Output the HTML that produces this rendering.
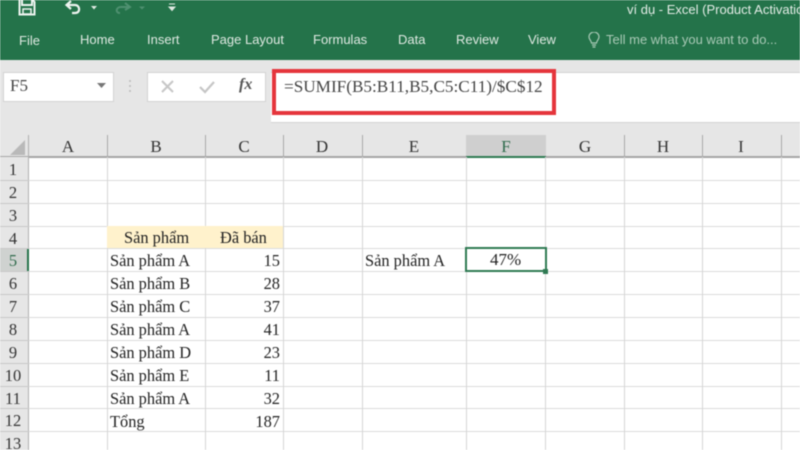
<!DOCTYPE html>
<html><head><meta charset="utf-8">
<style>
html,body{margin:0;padding:0;width:800px;height:450px;overflow:hidden;background:#fff}
.a{position:absolute;white-space:nowrap}
#r{position:relative;width:800px;height:450px;overflow:hidden;filter:blur(.5px)}
.rb{font:13px "Liberation Sans",sans-serif;color:#dfe9e2;top:32px}
.s{font:16.4px "Liberation Serif",serif;color:#222}
.h{font:17px "Liberation Serif",serif;color:#333;top:137px;width:40px;text-align:center}
.n{font:16.5px "Liberation Serif",serif;color:#333;left:0;width:26px;text-align:center}
.v{background:#d6d6d6;width:1px;top:157px;height:293px}
.l{background:#dcdcdc;height:1px;left:29px;width:771px}
.hl{background:#a9a9a9;width:1px;top:135px;height:22px}
.rl{background:#c8c8c8;height:1px;left:0;width:29px}
</style></head><body><div id="r">
<div class="a" style="left:0;top:0;width:800px;height:60px;background:#24734a"></div>
<div class="a" style="left:0;top:60px;width:800px;height:75px;background:#e6e6e6"></div>
<div class="a" style="left:0;top:135px;width:800px;height:22px;background:#e6e6e6"></div>
<div class="a" style="left:0;top:156px;width:800px;height:2px;background:#a6a6a6"></div>

<svg class="a" style="left:0;top:0" width="200" height="30" fill="none">
<path d="M19.500 0V14.500H34.500V2L33 0" stroke="#eef4f0" stroke-width="2"/>
<path d="M22 0V5H32V0" stroke="#eef4f0" stroke-width="2"/>
<rect x="23" y="9" width="8" height="5" stroke="#eef4f0" stroke-width="1.500"/>
<path d="M67 5H75C80 5 81 13 75 13H72" stroke="#eef4f0" stroke-width="2.200"/>
<path d="M71 1L66.500 5L71 9" stroke="#eef4f0" stroke-width="2.200"/>
<path d="M91 6H97L94 9.500Z" fill="#dfe9e2"/>
<path d="M130 7H121C116 7 115 13 120 13" stroke="#4f9070" stroke-width="2"/>
<path d="M125 3L130 7L125 10" stroke="#4f9070" stroke-width="2"/>
<path d="M139 6.500H145L142 9.500Z" fill="#4f9070"/>
<path d="M169 4H175M169 7H175L172 10.500Z" stroke="#dfe9e2" stroke-width="1" fill="#dfe9e2"/>
</svg>

<div class="a rb" style="left:19px;top:33px">File</div>
<div class="a rb" style="left:80px">Home</div>
<div class="a rb" style="left:147px">Insert</div>
<div class="a rb" style="left:211px">Page Layout</div>
<div class="a rb" style="left:313px">Formulas</div>
<div class="a rb" style="left:398px">Data</div>
<div class="a rb" style="left:456px">Review</div>
<div class="a rb" style="left:528px">View</div>
<svg class="a" style="left:587px;top:32px" width="14" height="16" fill="none" stroke="#a9c9b6" stroke-width="1.200"><path d="M4.500 11C4 8 2 7.500 2 5A5 5 0 0 1 12 5C12 7.500 10 8 9.500 11Z"/><path d="M5 13H9M5.500 15H8.500"/></svg>
<div class="a rb" style="left:606px;color:#a9c9b6">Tell me what you want to do...</div>
<div class="a" style="left:627px;top:2px;font:13px 'Liberation Sans',sans-serif;color:#e3ece6">ví dụ - Excel (Product Activation</div>

<div class="a" style="left:3px;top:72px;width:109px;height:28px;background:#fff;border:1px solid #d2d2d2"></div>
<div class="a" style="left:10px;top:76px;font:17px 'Liberation Serif',serif;color:#444">F5</div>
<svg class="a" style="left:96px;top:82px" width="12" height="8"><path d="M1 1H10L5.500 6Z" fill="#777"/></svg>
<svg class="a" style="left:127px;top:78px" width="8" height="18"><g fill="#bbb"><circle cx="3" cy="3" r="1"/><circle cx="3" cy="8" r="1"/><circle cx="3" cy="13" r="1"/></g></svg>
<div class="a" style="left:147px;top:72px;width:117px;height:28px;background:#fff;border:1px solid #d2d2d2"></div>
<svg class="a" style="left:158px;top:78px" width="100" height="18" fill="none">
<path d="M4 3L15 14M15 3L4 14" stroke="#c6c6c6" stroke-width="2"/>
<path d="M42 9L47 14L56 4" stroke="#c6c6c6" stroke-width="2.200"/>
</svg>
<div class="a" style="left:239px;top:76px;font:italic bold 16px 'Liberation Serif',serif;color:#555">fx</div>

<div class="a" style="left:271px;top:72px;width:529px;height:51px;background:#fff;border-top:1px solid #d2d2d2;border-bottom:1px solid #d2d2d2;box-sizing:border-box"></div>
<div class="a" style="left:272px;top:69px;width:284px;height:46px;box-sizing:border-box;border:4px solid #e5353c;background:#fff"></div>
<div class="a" style="left:284px;top:77px;font:17.2px 'Liberation Serif',serif;color:#444">=SUMIF(B5:B11,B5,C5:C11)/$C$12</div>

<svg class="a" style="left:10px;top:140px" width="16" height="16"><path d="M15 0V15H0Z" fill="#b9b9b9"/></svg>
<div class="a" style="left:0;top:157px;width:29px;height:293px;background:#e6e6e6"></div>
<div class="a" style="left:28px;top:135px;width:1px;height:315px;background:#b0b0b0"></div>
<div class="a" style="left:0;top:248px;width:28px;height:23px;background:#cfd2d0"></div>
<div class="a" style="left:27px;top:248px;width:2px;height:23px;background:#24734a"></div>
<div class="a" style="left:466px;top:135px;width:80px;height:21px;background:#cfcfcf"></div>
<div class="a" style="left:466px;top:156px;width:80px;height:2px;background:#2f7a53"></div>

<div class="a l" style="top:180px"></div><div class="a l" style="top:203px"></div><div class="a l" style="top:226px"></div><div class="a l" style="top:248px"></div><div class="a l" style="top:271px"></div><div class="a l" style="top:294px"></div><div class="a l" style="top:317px"></div><div class="a l" style="top:340px"></div><div class="a l" style="top:363px"></div><div class="a l" style="top:386px"></div><div class="a l" style="top:408px"></div><div class="a l" style="top:431px"></div>
<div class="a rl" style="top:180px"></div><div class="a rl" style="top:203px"></div><div class="a rl" style="top:226px"></div><div class="a rl" style="top:248px"></div><div class="a rl" style="top:271px"></div><div class="a rl" style="top:294px"></div><div class="a rl" style="top:317px"></div><div class="a rl" style="top:340px"></div><div class="a rl" style="top:363px"></div><div class="a rl" style="top:386px"></div><div class="a rl" style="top:408px"></div><div class="a rl" style="top:431px"></div>

<div class="a v" style="left:107px"></div><div class="a v" style="left:205px"></div><div class="a v" style="left:283px"></div><div class="a v" style="left:362px"></div><div class="a v" style="left:466px"></div><div class="a v" style="left:545px"></div><div class="a v" style="left:624px"></div><div class="a v" style="left:702px"></div><div class="a v" style="left:781px"></div>
<div class="a hl" style="left:107px"></div><div class="a hl" style="left:205px"></div><div class="a hl" style="left:283px"></div><div class="a hl" style="left:362px"></div><div class="a hl" style="left:624px"></div><div class="a hl" style="left:702px"></div><div class="a hl" style="left:781px"></div>

<div class="a" style="left:107px;top:226px;width:176px;height:22px;background:#fff2cc"></div>

<div class="a h" style="left:48px">A</div><div class="a h" style="left:136px">B</div><div class="a h" style="left:224px">C</div><div class="a h" style="left:302px">D</div><div class="a h" style="left:394px">E</div><div class="a h" style="left:486px;color:#2f6b4c">F</div><div class="a h" style="left:565px">G</div><div class="a h" style="left:643px">H</div><div class="a h" style="left:721px">I</div>

<div class="a n" style="top:160px">1</div><div class="a n" style="top:183px">2</div><div class="a n" style="top:206px">3</div><div class="a n" style="top:229px">4</div><div class="a n" style="top:251px;color:#2f6b4c">5</div><div class="a n" style="top:274px">6</div><div class="a n" style="top:297px">7</div><div class="a n" style="top:320px">8</div><div class="a n" style="top:343px">9</div><div class="a n" style="top:366px">10</div><div class="a n" style="top:389px">11</div><div class="a n" style="top:411px">12</div><div class="a n" style="top:434px">13</div>

<div class="a s" style="left:124px;top:228px">Sản phẩm</div>
<div class="a s" style="left:220px;top:228px">Đã bán</div>
<div class="a s" style="left:110px;top:251px">Sản phẩm A</div><div class="a s" style="left:110px;top:274px">Sản phẩm B</div><div class="a s" style="left:110px;top:297px">Sản phẩm C</div><div class="a s" style="left:110px;top:320px">Sản phẩm A</div><div class="a s" style="left:110px;top:343px">Sản phẩm D</div><div class="a s" style="left:110px;top:366px">Sản phẩm E</div><div class="a s" style="left:110px;top:389px">Sản phẩm A</div><div class="a s" style="left:110px;top:412px">Tổng</div>
<div class="a s" style="right:520px;top:251px">15</div><div class="a s" style="right:520px;top:274px">28</div><div class="a s" style="right:520px;top:297px">37</div><div class="a s" style="right:520px;top:320px">41</div><div class="a s" style="right:520px;top:343px">23</div><div class="a s" style="right:520px;top:366px">11</div><div class="a s" style="right:520px;top:389px">32</div><div class="a s" style="right:520px;top:412px">187</div>

<div class="a s" style="left:365px;top:251px">Sản phẩm A</div>
<div class="a" style="left:465px;top:247px;width:82px;height:25px;box-sizing:border-box;border:2px solid #2f7a53;background:#fff"></div>
<div class="a s" style="left:490px;top:250px;font-size:17px">47%</div>
<div class="a" style="left:543px;top:269px;width:5px;height:5px;background:#2f7a53;border:0"></div>
</div></body></html>
